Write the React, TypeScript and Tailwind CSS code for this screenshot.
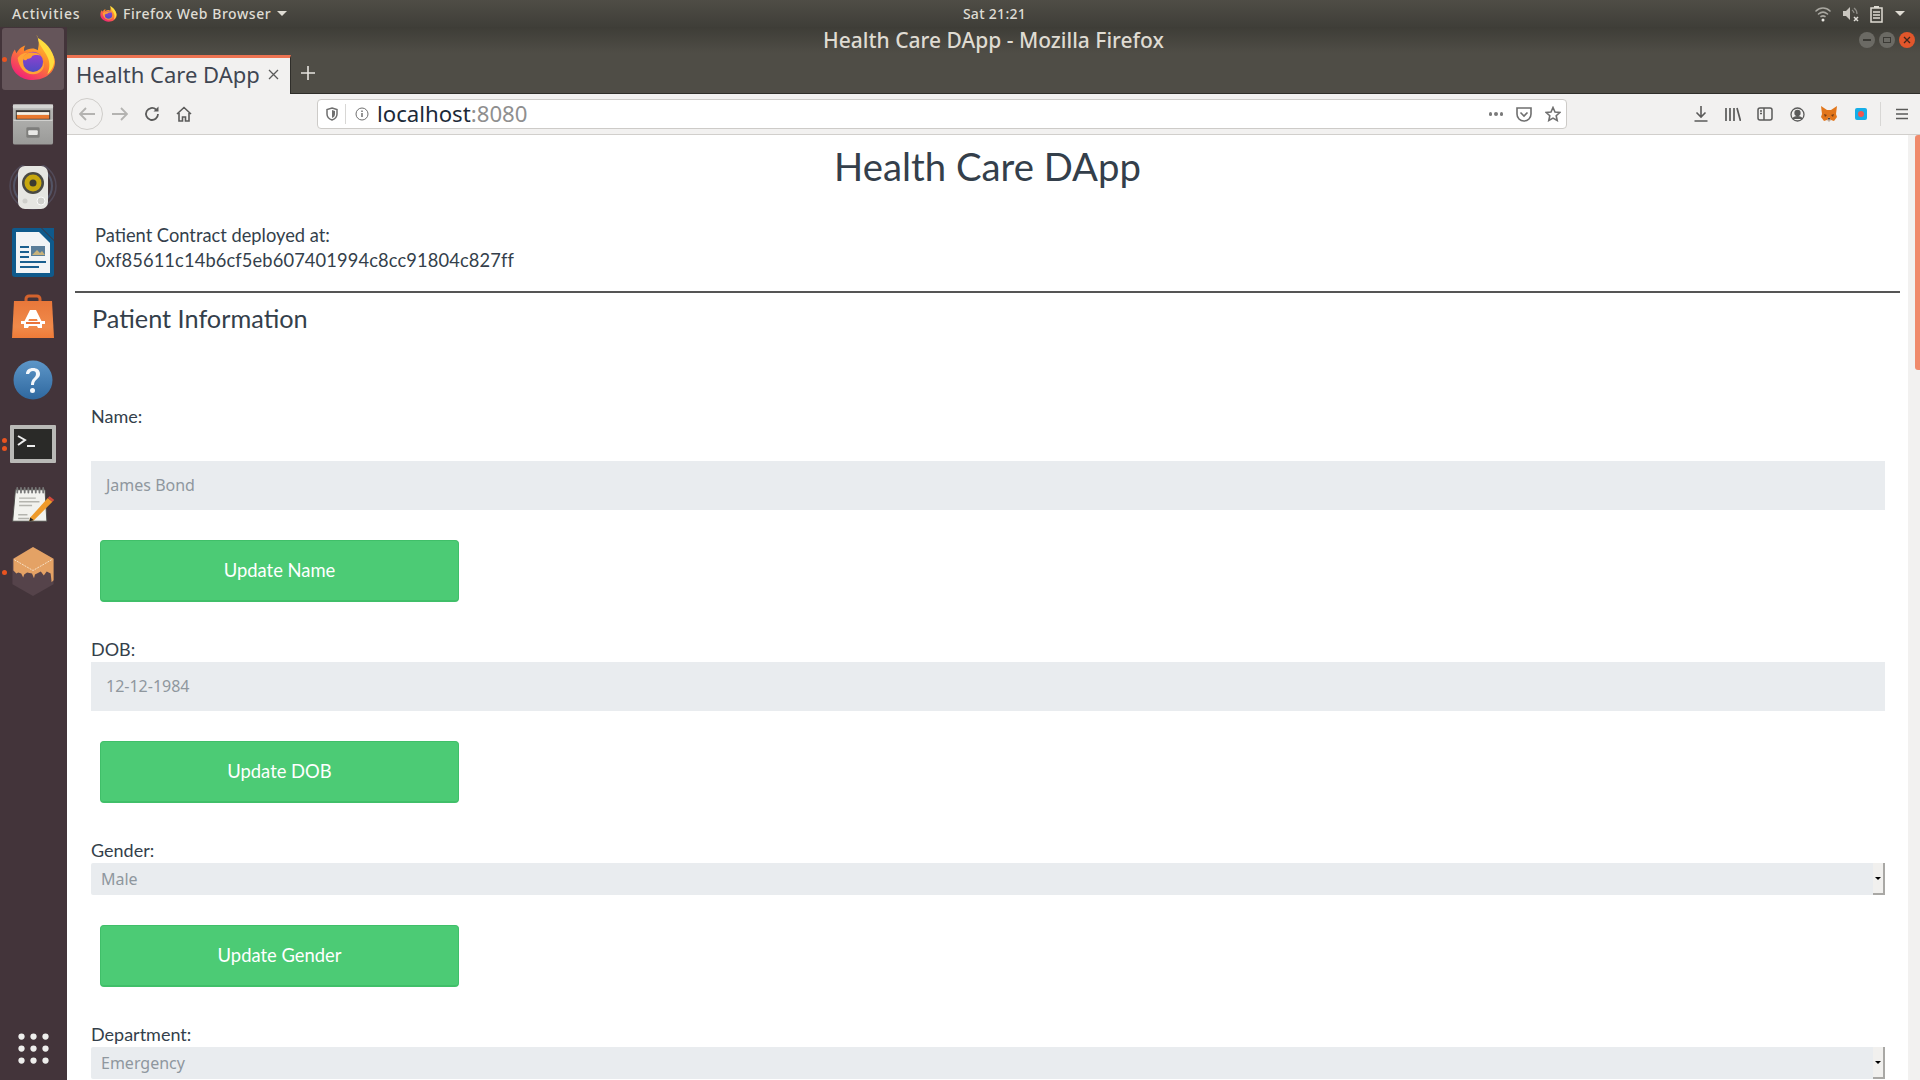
import React from "react";

const chromeFont = "font-['Noto_Sans','Open_Sans',sans-serif]";
const pageFont = "font-['Lato','Open_Sans',sans-serif]";
const fieldFont = "font-['Noto_Sans','Open_Sans',sans-serif]";

const FirefoxLogo = ({ size, id }: { size: number; id: string }) => (
  <svg width={size} height={size} viewBox="0 0 48 48">
    <defs>
      <linearGradient id={`${id}Body`} x1="0.8" y1="0" x2="0.2" y2="1">
        <stop offset="0" stopColor="#ffd43a" />
        <stop offset="0.45" stopColor="#ff8a2a" />
        <stop offset="1" stopColor="#f0187e" />
      </linearGradient>
      <linearGradient id={`${id}Globe`} x1="0.5" y1="0" x2="0.5" y2="1">
        <stop offset="0" stopColor="#9a3fd0" />
        <stop offset="1" stopColor="#4f4bc4" />
      </linearGradient>
    </defs>
    <path d="M28 1c2 6 8 8 13 14 4 5 6 9 6 13 0 11-10 19-23 19S1 38 1 27c0-5 2-9 4-12 1 2 1 3 2 4 1-3 5-7 9-8-1 2-2 3-1 6 4-3 10-4 14-1 1-5 2-9-1-16z" fill={`url(#${id}Body)`} />
    <path d="M29 3c6 3 17 12 17 24 0 6-3 10-7 14 2-5 3-10 1-16-2-7-9-12-11-22z" fill="#ffdc3e" />
    <path d="M8 24c2-3 6-6 10-5-2 1-4 3-4 5 3 0 4 2 4 4 0 4 3 8 8 8 6 0 9-4 9-8 2 7-3 13-11 13-9 0-15-8-16-17z" fill="#ffa436" />
    <circle cx="24" cy="28" r="10.5" fill={`url(#${id}Globe)`} />
    <path d="M13 24c3-6 13-8 20-2-5-2-8-1-10 0 0 2-3 3-5 3-1 2-3 2-5-1z" fill="#ff9f32" />
  </svg>
);

const FilesIcon = () => (
  <svg width="42" height="43" viewBox="0 0 44 44">
    <defs>
      <linearGradient id="filesBody" x1="0" y1="0" x2="0" y2="1">
        <stop offset="0" stopColor="#b9b9b7" />
        <stop offset="1" stopColor="#9a9a98" />
      </linearGradient>
    </defs>
    <rect x="1" y="1" width="42" height="42" rx="2" fill="url(#filesBody)" />
    <rect x="1" y="1" width="42" height="4" fill="#d4d4d2" />
    <rect x="4" y="7" width="36" height="10" fill="#3a3735" />
    <rect x="5" y="9" width="34" height="3" fill="#f6f0e4" />
    <rect x="5" y="12" width="34" height="4" fill="#e8792f" />
    <path d="M1 17h42l-1 1H2z" fill="#dcdcda" />
    <rect x="15" y="25" width="14" height="11" rx="1.5" fill="#7e7e7c" />
    <rect x="17" y="28" width="10" height="5" rx="1" fill="#e8e8e6" />
  </svg>
);

const SpeakerIcon = () => (
  <svg width="50" height="46" viewBox="0 0 50 46">
    <circle cx="25" cy="21" r="23" fill="none" stroke="#5c5a6e" strokeWidth="1.5" opacity="0.6" />
    <circle cx="25" cy="21" r="19" fill="none" stroke="#5f6a84" strokeWidth="2" opacity="0.6" />
    <rect x="10" y="1" width="30" height="43" rx="7" fill="#e6e6e2" />
    <circle cx="25" cy="18" r="11" fill="#4a4a44" />
    <circle cx="25" cy="18" r="8.5" fill="#c8a80e" />
    <circle cx="25" cy="18" r="3.5" fill="#3c3a30" />
    <circle cx="33" cy="36" r="4" fill="#d0d0cc" stroke="#fafafa" />
    <circle cx="17" cy="36" r="2.5" fill="#cfcfcb" />
  </svg>
);

const WriterIcon = () => (
  <svg width="42" height="49" viewBox="0 0 42 49">
    <path d="M2 0h27l13 13v33a3 3 0 0 1-3 3H3a3 3 0 0 1-3-3V2a2 2 0 0 1 2-2z" fill="#0f5a8c" />
    <path d="M4 4h23l11 11v30H4z" fill="#f2f4f6" />
    <path d="M30 0h12v12z" fill="#0f5a8c" />
    <rect x="8" y="18" width="9" height="2" fill="#1a5f8f" />
    <rect x="8" y="23" width="9" height="2" fill="#1a5f8f" />
    <rect x="8" y="28" width="9" height="2" fill="#1a5f8f" />
    <rect x="8" y="33" width="26" height="2" fill="#1a5f8f" />
    <rect x="8" y="38" width="19" height="2" fill="#1a5f8f" />
    <rect x="19" y="18" width="14" height="10" fill="#5a7d99" />
    <path d="M20 27l5-5 3 3 2-2 3 4z" fill="#c9b27a" />
  </svg>
);

const StoreIcon = () => (
  <svg width="42" height="44" viewBox="0 0 42 44">
    <defs>
      <linearGradient id="storeBag" x1="0" y1="0" x2="0" y2="1">
        <stop offset="0" stopColor="#e9773a" />
        <stop offset="0.7" stopColor="#f08a4a" />
        <stop offset="1" stopColor="#ee7b38" />
      </linearGradient>
    </defs>
    <path d="M14 12V5a3 3 0 0 1 3-3h8a3 3 0 0 1 3 3v7" fill="none" stroke="#d2622d" strokeWidth="3" />
    <path d="M2 7h38l2 37H0z" fill="url(#storeBag)" />
    <path d="M18 16h6l6 12h-4l-1-3h-8l-1 3h-4z" fill="#fff" />
    <path d="M9 27h24v3h-3v4h-4l-1-2h-8l-1 2h-4v-4H9z" fill="#fff" />
    <rect x="14" y="28" width="14" height="2" fill="#e9733a" />
  </svg>
);

const HelpIcon = () => (
  <svg width="40" height="40" viewBox="0 0 40 40">
    <defs>
      <linearGradient id="helpBg" x1="0" y1="0" x2="0" y2="1">
        <stop offset="0" stopColor="#5d96c8" />
        <stop offset="1" stopColor="#2f689f" />
      </linearGradient>
    </defs>
    <circle cx="20" cy="20" r="19.5" fill="url(#helpBg)" />
    <path d="M13 14c0-4 3-6 7-6s7 2 7 6c0 5-6 5-6 11h-3c0-7 5-7 5-11 0-2-1-3-3-3s-3 1-4 3z" fill="#f4f7fb" />
    <circle cx="19.5" cy="30.5" r="2.5" fill="#f4f7fb" />
  </svg>
);

const TerminalIcon = () => (
  <svg width="46" height="38" viewBox="0 0 46 38">
    <rect width="46" height="38" rx="1" fill="#b9b9b6" />
    <rect x="4" y="4" width="38" height="30" fill="#2a2a28" />
    <path d="M8 11l7 4-7 5" fill="none" stroke="#eee" strokeWidth="2" />
    <rect x="17" y="20" width="8" height="2" fill="#eee" />
  </svg>
);

const EditorIcon = () => (
  <svg width="46" height="37" viewBox="0 0 46 40">
    <path d="M4 3h32l2 34H1z" fill="#f2f2ee" stroke="#4a4a46" />
    <path d="M6 1v5M10 1v5M14 1v5M18 1v5M22 1v5M26 1v5M30 1v5M34 1v5" stroke="#777" strokeWidth="2" strokeLinecap="round" />
    <path d="M8 12h18M8 16h22M8 20h14M7 30h10M7 34h12" stroke="#b4b4ae" strokeWidth="1.5" />
    <path d="M20 33l19-21 5 4-20 20-5 1z" fill="#ee9a2a" />
    <path d="M39 12l2-2 5 4-2 2z" fill="#d24a3c" />
    <path d="M20 33l-1 4 5-1z" fill="#222" />
  </svg>
);

const BoxIcon = () => (
  <svg width="42" height="49" viewBox="0 0 42 50">
    <path d="M21 0l21 12v26L21 50 0 38V12z" fill="#55434a" />
    <path d="M21 0l21 12v22l-2 2-1-9-4-2-3 4-3-4-6 3-1 4-2-5-5-1-3 2-1 3-2-4-3-1-2 1-3-3V12z" fill="#e4a265" />
    <path d="M2 13l19 11 19-11" fill="none" stroke="#fbeedb" strokeWidth="0.8" strokeDasharray="2 1" />
  </svg>
);

const dockItems = [
  { icon: <div className="-mt-[3px]"><FirefoxLogo size={46} id="ffDock" /></div>, dots: 1, active: true },
  { icon: <FilesIcon />, dots: 0 },
  { icon: <SpeakerIcon />, dots: 0 },
  { icon: <WriterIcon />, dots: 0 },
  { icon: <StoreIcon />, dots: 0 },
  { icon: <HelpIcon />, dots: 0 },
  { icon: <TerminalIcon />, dots: 2 },
  { icon: <div className="-mt-[5px]"><EditorIcon /></div>, dots: 0 },
  { icon: <div className="-mt-[2px]"><BoxIcon /></div>, dots: 1 },
];

const Dock = () => (
  <aside className="w-[67px] shrink-0 bg-[#43343a] flex flex-col items-center pt-[1px] pr-[1px] pb-[17px]">
    {dockItems.map((item, index) => (
      <div
        key={index}
        className={
          "relative w-[62px] flex items-center justify-center rounded-[3px] " +
          (item.active ? "h-[62px] mb-[2px] bg-[#65555a]" : "h-[64px]")
        }
      >
        {item.dots > 0 && (
          <div className="absolute left-[0px] top-0 bottom-0 flex flex-col justify-center gap-[3px]">
            {Array.from({ length: item.dots }).map((_, i) => (
              <span key={i} className="block w-[5px] h-[5px] rounded-full bg-[#e95420]" />
            ))}
          </div>
        )}
        {item.icon}
      </div>
    ))}
    <div className="mt-auto grid grid-cols-3 gap-x-[7px] gap-y-[7px]">
      {Array.from({ length: 9 }).map((_, i) => (
        <span key={i} className="block w-[5px] h-[5px] rounded-full bg-[#eeeeec] scale-125" />
      ))}
    </div>
  </aside>
);

const TopBar = () => (
  <div className={`h-[27px] shrink-0 flex items-center justify-between px-[12px] bg-gradient-to-b from-[#4f4d46] to-[#3f3e38] text-[#dfdcd4] text-[14px] font-medium ${chromeFont}`}>
    <div className="flex-1 flex items-center">
      <span className="w-[88px] tracking-[0.8px]">Activities</span>
      <FirefoxLogo size={17} id="ffTop" />
      <span className="ml-[6px] tracking-[0.55px]">Firefox Web Browser</span>
      <span className="ml-[6px] w-0 h-0 border-x-[5px] border-x-transparent border-t-[5px] border-t-[#dfdcd4]" />
    </div>
    <span className="ml-[72px] tracking-[0.3px]">Sat 21:21</span>
    <div className="flex-1 flex items-center justify-end gap-[10px] pr-[3px]">
      <svg width="18" height="16" viewBox="0 0 18 16" fill="none" stroke="#a9a7a0" strokeWidth="1.6" strokeLinecap="round">
        <path d="M2 5c4-4 10-4 14 0M4.5 8c3-2.5 6-2.5 9 0M7 10.500c1.500-1 2.500-1 4 0" />
        <circle cx="9" cy="14" r="1.500" fill="#e8e6e0" stroke="none" />
      </svg>
      <svg width="18" height="16" viewBox="0 0 18 16" fill="#c9c6bf">
        <path d="M1 5h3l4-4v13L4 10H1z" />
        <path d="M10 4c1.500 1 2 2 2 3M12 2c2 1.500 3 3 3 6" fill="none" stroke="#8f8d87" strokeWidth="1.200" />
        <path d="M12 11l4 4M16 11l-4 4" stroke="#e0ded8" strokeWidth="1.500" />
      </svg>
      <svg width="13" height="18" viewBox="0 0 13 18" fill="none" stroke="#dfdcd4" strokeWidth="1.500">
        <rect x="1" y="3" width="11" height="14" />
        <path d="M4 1h5v2H4z" fill="#dfdcd4" stroke="none" />
        <path d="M3 7h7M3 10h7M3 13h7" />
      </svg>
      <span className="w-0 h-0 ml-[2px] border-x-[5px] border-x-transparent border-t-[5px] border-t-[#dfdcd4]" />
    </div>
  </div>
);

const WindowControls = () => (
  <div className="flex items-center gap-[4px]">
    <span className="w-[16px] h-[16px] rounded-full bg-[#6b6a64] flex items-center justify-center">
      <span className="w-[8px] h-[1.5px] bg-[#3b3a35]" />
    </span>
    <span className="w-[16px] h-[16px] rounded-full bg-[#6b6a64] flex items-center justify-center">
      <span className="w-[8px] h-[6px] border border-[#3b3a35]" />
    </span>
    <span className="w-[16px] h-[16px] rounded-full bg-[#e2562b] flex items-center justify-center">
      <svg width="8" height="8" viewBox="0 0 8 8" stroke="#41261c" strokeWidth="1.300"><path d="M1 1l6 6M7 1L1 7" /></svg>
    </span>
  </div>
);

const TitleBar = () => (
  <div className="h-[26px] shrink-0 flex items-center bg-gradient-to-b from-[#3e3d37] to-[#4f4d46]">
    <div className={`flex-1 pl-[61px] text-center text-[21px] leading-none text-[#dfdbd2] font-medium ${chromeFont}`}>
      Health Care DApp - Mozilla Firefox
    </div>
    <div className="pr-[5px]">
      <WindowControls />
    </div>
  </div>
);

const TabStrip = () => (
  <div className="h-[41px] shrink-0 flex items-stretch bg-[#4f4d46]">
    <div className={`mt-[2px] w-[224px] shrink-0 flex items-center pl-[9px] pr-[11px] pb-[4px] bg-[#f2f1f0] border-t-[3px] border-r border-r-[#2f2e2a] border-t-[#ed7352] text-[22px] text-[#3f4652] ${chromeFont}`}>
      <span className="flex-1 leading-none whitespace-nowrap">Health Care DApp</span>
      <svg width="11" height="11" viewBox="0 0 11 11" stroke="#5a5a5a" strokeWidth="1.300"><path d="M1 1l9 9M10 1l-9 9" /></svg>
    </div>
    <div className="flex-1 flex border-b border-[#2f2e2a]">
      <div className="w-[34px] flex items-center justify-center">
        <svg width="16" height="16" viewBox="0 0 16 16" stroke="#e6e4df" strokeWidth="1.600"><path d="M8 1v14M1 8h14" /></svg>
      </div>
    </div>
  </div>
);

const ToolIcon = ({ children }: { children: React.ReactNode }) => (
  <span className="w-[32px] h-[32px] shrink-0 flex items-center justify-center">{children}</span>
);

const MetaMaskFox = () => (
  <svg width="18" height="18" viewBox="0 0 18 18">
    <path d="M1 1l6 4h4l6-4-1 8 1 3-3 4-3-1H7l-3 1-3-4 1-3z" fill="#e2761b" />
    <path d="M7 15l2 2 2-2-2-3z" fill="#c0ad9e" />
    <path d="M4 9l3 1-2 2zM14 9l-3 1 2 2z" fill="#763d16" />
    <path d="M8 13h2l-1 2z" fill="#222" />
  </svg>
);

const Toolbar = () => (
  <div className="h-[41px] shrink-0 flex items-center overflow-hidden bg-[#f2f1f0] border-b border-[#d1cfcc] pl-[4px]">
    <span className="w-[32px] h-[32px] shrink-0 rounded-full border border-[#cfcdca] flex items-center justify-center">
      <svg width="16" height="14" viewBox="0 0 16 14" fill="none" stroke="#b4b3b1" strokeWidth="1.800"><path d="M7 1L1 7l6 6M1 7h15" /></svg>
    </span>
    <span className="w-[32px] h-[32px] shrink-0 ml-[1px] flex items-center justify-center">
      <svg width="16" height="14" viewBox="0 0 16 14" fill="none" stroke="#b4b3b1" strokeWidth="1.800"><path d="M9 1l6 6-6 6M15 7H0" /></svg>
    </span>
    <ToolIcon>
      <svg width="16" height="16" viewBox="0 0 16 16" fill="none" stroke="#5b5b5a" strokeWidth="1.800"><path d="M14 8a6 6 0 1 1-2-4.500" /><path d="M14.500 0.500v5h-5z" fill="#5b5b5a" stroke="none" /></svg>
    </ToolIcon>
    <ToolIcon>
      <svg width="16" height="16" viewBox="0 0 16 16" fill="none" stroke="#5b5b5a" strokeWidth="1.600"><path d="M1 8l7-6.500L15 8M3 7v8h3.500v-4h3v4H13V7" /></svg>
    </ToolIcon>
    <div className={`ml-[117px] w-[1250px] h-[30px] shrink-0 flex items-center bg-white border border-[#cdcbc8] rounded-[4px] ${chromeFont}`}>
      <span className="w-[27px] flex justify-center">
        <svg width="12" height="14" viewBox="0 0 12 14" fill="none" stroke="#6f6f6f" strokeWidth="1.500"><path d="M6 1l5 1.500V7c0 3-2 5-5 6-3-1-5-3-5-6V2.500z" /><path d="M6 3l3 1v3c0 2-1 3-3 4z" fill="#6f6f6f" stroke="none" /></svg>
      </span>
      <span className="w-px h-[20px] bg-[#d8d7d5]" />
      <span className="w-[31px] flex justify-center">
        <svg width="14" height="14" viewBox="0 0 14 14" fill="none" stroke="#6f6f6f"><circle cx="7" cy="7" r="6" /><path d="M7 6v4" strokeWidth="1.500" /><path d="M7 3.500v1.500" strokeWidth="1.500" /></svg>
      </span>
      <span className="text-[22.200px] leading-none text-[#1c2a38]">localhost<span className="text-[#8f8f8f]">:8080</span></span>
      <div className="ml-auto flex items-center gap-[13px] pr-[5px]">
        <span className="flex gap-[2px]">
          <span className="block w-[3.500px] h-[3.500px] rounded-full bg-[#7a7a7a]" />
          <span className="block w-[3.500px] h-[3.500px] rounded-full bg-[#7a7a7a]" />
          <span className="block w-[3.500px] h-[3.500px] rounded-full bg-[#7a7a7a]" />
        </span>
        <svg width="16" height="15" viewBox="0 0 16 15" fill="none" stroke="#6f6f6f" strokeWidth="1.600"><path d="M1 1h14v6c0 4-3 7-7 7s-7-3-7-7z" /><path d="M4.500 5.500L8 9l3.500-3.500" /></svg>
        <svg width="16" height="16" viewBox="0 0 16 16" fill="none" stroke="#6f6f6f" strokeWidth="1.600"><path d="M8 1.500l2 4.500 4.800.5-3.600 3.200 1 4.800L8 12.100l-4.200 2.400 1-4.800L1.200 6.500 6 6z" /></svg>
      </div>
    </div>
    <div className="ml-[118px] shrink-0 flex items-center">
      <span className="w-[32px] flex justify-center">
        <svg width="14" height="16" viewBox="0 0 14 16" fill="none" stroke="#5b5b5a" strokeWidth="1.600"><path d="M7 0v11M2.500 6.500L7 11l4.500-4.500M0.500 15h13" /></svg>
      </span>
      <span className="w-[32px] flex justify-center">
        <svg width="16" height="14" viewBox="0 0 16 14" fill="none" stroke="#5b5b5a" strokeWidth="1.700"><path d="M1 1v13M5 1v13M9 1v13M12 1l3.500 13" /></svg>
      </span>
      <span className="w-[32px] flex justify-center">
        <svg width="16" height="14" viewBox="0 0 16 14" fill="none" stroke="#5b5b5a" strokeWidth="1.500"><rect x="1" y="1" width="14" height="12" rx="2" /><path d="M7 1v12" /><path d="M3 4h2M3 6.500h2" /></svg>
      </span>
      <span className="w-[32px] flex justify-center">
        <svg width="15" height="15" viewBox="0 0 15 15" fill="none" stroke="#5b5b5a" strokeWidth="1.300"><circle cx="7.500" cy="7.500" r="6.500" /><circle cx="7.500" cy="6" r="2.500" fill="#5b5b5a" /><path d="M3 12c1-3 8-3 9 0" fill="#5b5b5a" /></svg>
      </span>
      <span className="w-[32px] flex justify-center"><MetaMaskFox /></span>
      <span className="w-[32px] flex justify-center">
        <span className="w-[12px] h-[12px] rounded-[2px] bg-[#16aee8] flex items-center justify-center">
          <span className="w-[6px] h-[6px] rounded-full bg-[#f2564f]" />
        </span>
      </span>
      <span className="w-px h-[24px] ml-[3px] bg-[#d8d7d5]" />
      <span className="w-[42px] flex justify-center">
        <svg width="12" height="12" viewBox="0 0 12 12" stroke="#5b5b5a" strokeWidth="1.600"><path d="M0 1.500h12M0 6h12M0 10.500h12" /></svg>
      </span>
    </div>
  </div>
);

const UpdateButton = ({ label }: { label: string }) => (
  <button className="block ml-[9px] w-[359px] h-[62px] pt-[1px] rounded-[4px] bg-[#4ccb75] border border-b-2 border-[#40bf69] text-white text-[18.400px]">
    {label}
  </button>
);

const FieldInput = ({ value }: { value: string }) => (
  <div className={`h-[49px] pb-[2px] bg-[#e9ecef] pl-[15px] flex items-center text-[16px] text-[#8f979e] ${fieldFont}`}>{value}</div>
);

const FieldSelect = ({ value }: { value: string }) => (
  <div className={`h-[32px] flex items-stretch bg-[#e9ecef] rounded-[2px] text-[16px] text-[#8f979e] ${fieldFont}`}>
    <span className="flex-1 pl-[10px] flex items-center">{value}</span>
    <span className="w-[12px] bg-[#f1f0ee] border-r-2 border-b-2 border-[#a9a8a5] flex items-center justify-center">
      <span className="w-0 h-0 border-x-[3px] border-x-transparent border-t-[3px] border-t-black" />
    </span>
  </div>
);

const PatientPage = () => (
  <div className={`flex-1 min-w-0 overflow-hidden bg-white text-[#343f4b] ${pageFont}`}>
    <h1 className="pt-[8px] text-center text-[38.300px] leading-[46px]">Health Care DApp</h1>
    <div className="mt-[34px] ml-[28px] text-[18.300px] leading-[25px]">
      <p>Patient Contract deployed at:</p>
      <p className="tracking-[0.12px]">0xf85611c14b6cf5eb607401994c8cc91804c827ff</p>
    </div>
    <hr className="mt-[18px] ml-[8px] mr-[8px] border-t-2 border-[#555]" />
    <h2 className="mt-[9px] ml-[25px] text-[25.300px] leading-[32px]">Patient Information</h2>

    <div className="mt-[70px] ml-[24px] mr-[23px]">
      <label className="block text-[18px] leading-[24px]">Name:</label>
      <div className="mt-[33px]"><FieldInput value="James Bond" /></div>
      <div className="mt-[30px]"><UpdateButton label="Update Name" /></div>

      <label className="block mt-[35px] text-[18px] leading-[24px]">DOB:</label>
      <div className="mt-[1px]"><FieldInput value="12-12-1984" /></div>
      <div className="mt-[30px]"><UpdateButton label="Update DOB" /></div>

      <label className="block mt-[35px] text-[18px] leading-[24px]">Gender:</label>
      <div className="mt-[1px]"><FieldSelect value="Male" /></div>
      <div className="mt-[30px]"><UpdateButton label="Update Gender" /></div>

      <label className="block mt-[35px] text-[18px] leading-[24px]">Department:</label>
      <div className="mt-[1px]"><FieldSelect value="Emergency" /></div>
    </div>
  </div>
);

const Scrollbar = () => (
  <div className="w-[12px] shrink-0 bg-[#f2f1f0] flex justify-end">
    <div className="w-[5px] h-[235px] bg-[#f08a6b] rounded-l-[3px]" />
  </div>
);

const App = () => {
  return (
    <div className="w-[1920px] h-[1080px] overflow-hidden flex flex-col bg-[#3f3e38]">
      <TopBar />
      <div className="flex-1 min-h-0 flex">
        <Dock />
        <div className="flex-1 min-w-0 flex flex-col">
          <TitleBar />
          <TabStrip />
          <Toolbar />
          <div className="flex-1 min-h-0 flex">
            <PatientPage />
            <Scrollbar />
          </div>
        </div>
      </div>
    </div>
  );
};

export default App;
